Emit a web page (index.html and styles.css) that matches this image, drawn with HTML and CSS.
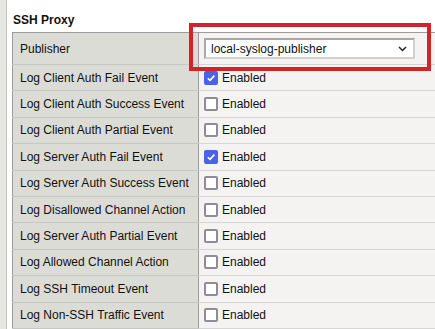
FILE: index.html
```html
<!DOCTYPE html>
<html lang="en">

<head>
    <meta charset="utf-8">
    <title>SSH Proxy</title>
    <link rel="stylesheet" href="styles.css">
</head>

<body>
    <div class="sidebar"></div>

    <main class="content">
        <h3 class="section-title">SSH Proxy</h3>

        <table class="settings">
            <colgroup>
                <col class="col-label">
                <col>
            </colgroup>
            <tr class="row-publisher">
                <td class="label">Publisher</td>
                <td class="value">
                    <div class="select">
                        <span>local-syslog-publisher</span>
                        <svg class="chevron" width="9" height="6" viewBox="0 0 9 6">
                            <path d="M1 1 L4.5 4.5 L8 1" fill="none" stroke="#222" stroke-width="1.5"/>
                        </svg>
                    </div>
                    <div class="highlight"></div>
                </td>
            </tr>
            <tr>
                <td class="label">Log Client Auth Fail Event</td>
                <td class="value"><label class="check"><span class="box checked"></span>Enabled</label></td>
            </tr>
            <tr>
                <td class="label">Log Client Auth Success Event</td>
                <td class="value"><label class="check"><span class="box"></span>Enabled</label></td>
            </tr>
            <tr>
                <td class="label">Log Client Auth Partial Event</td>
                <td class="value"><label class="check"><span class="box"></span>Enabled</label></td>
            </tr>
            <tr>
                <td class="label">Log Server Auth Fail Event</td>
                <td class="value"><label class="check"><span class="box checked"></span>Enabled</label></td>
            </tr>
            <tr>
                <td class="label">Log Server Auth Success Event</td>
                <td class="value"><label class="check"><span class="box"></span>Enabled</label></td>
            </tr>
            <tr>
                <td class="label">Log Disallowed Channel Action</td>
                <td class="value"><label class="check"><span class="box"></span>Enabled</label></td>
            </tr>
            <tr>
                <td class="label">Log Server Auth Partial Event</td>
                <td class="value"><label class="check"><span class="box"></span>Enabled</label></td>
            </tr>
            <tr>
                <td class="label">Log Allowed Channel Action</td>
                <td class="value"><label class="check"><span class="box"></span>Enabled</label></td>
            </tr>
            <tr>
                <td class="label">Log SSH Timeout Event</td>
                <td class="value"><label class="check"><span class="box"></span>Enabled</label></td>
            </tr>
            <tr>
                <td class="label">Log Non-SSH Traffic Event</td>
                <td class="value"><label class="check"><span class="box"></span>Enabled</label></td>
            </tr>
        </table>
    </main>
</body>

</html>
```

FILE: styles.css
```css
html, body {
    margin: 0;
    height: 100%;
}

body {
    display: flex;
    background-color: #fff;
    font-family: 'Liberation Sans', Arial, sans-serif;
    color: #111;
    overflow: hidden;
}

.sidebar {
    width: 6px;
    flex: none;
    background-color: #e6e6e2;
    border-right: 1px solid #c4c4c0;
}

.content {
    flex: 1;
    padding-left: 5px;
}

.section-title {
    font-size: 12px;
    font-weight: bold;
    margin: 14px 0 6px 1px;
    line-height: 12px;
}

.settings {
    border-collapse: collapse;
    table-layout: fixed;
    width: 440px;
    border: 1px solid #9c9c9c;
    font-size: 12px;
    white-space: nowrap;
}

.col-label {
    width: 186px;
}

.settings td {
    height: 25.4px;
    padding: 0;
    border-bottom: 1px solid #c6c6c2;
}

.label {
    padding-left: 7px !important;
    background-color: #dcdcd7;
    border-right: 1px solid #9c9c9c;
}

.value {
    background-color: #f4f3f1;
    padding-left: 5px !important;
    border-bottom-color: #d6d6d4 !important;
}

.row-publisher td {
    height: 31px;
}

.row-publisher .value {
    position: relative;
}

.select {
    display: flex;
    align-items: center;
    justify-content: space-between;
    box-sizing: border-box;
    width: 211px;
    height: 21px;
    padding: 0 6px 0 5px;
    background-color: #fff;
    border: 2px solid #a8a8a8;
    border-right-color: #d0d0d0;
    border-bottom-color: #d0d0d0;
}

.highlight {
    position: absolute;
    left: -10px;
    top: -10px;
    width: 234px;
    height: 40px;
    border: 4px solid #d2232a;
}

.check {
    display: flex;
    align-items: center;
    gap: 4px;
}

.box {
    box-sizing: border-box;
    width: 14px;
    height: 14px;
    border: 2px solid #8f8c98;
    border-radius: 2px;
    background-color: #fff;
}

.box.checked {
    border-color: #4a62e6;
    background-color: #4a62e6;
    background-image: url("data:image/svg+xml,%3Csvg xmlns='http://www.w3.org/2000/svg' viewBox='0 0 10 10'%3E%3Cpath d='M1.8 5.2 L4 7.4 L8.4 2.6' fill='none' stroke='white' stroke-width='1.6'/%3E%3C/svg%3E");
    background-size: 100% 100%;
}
```
